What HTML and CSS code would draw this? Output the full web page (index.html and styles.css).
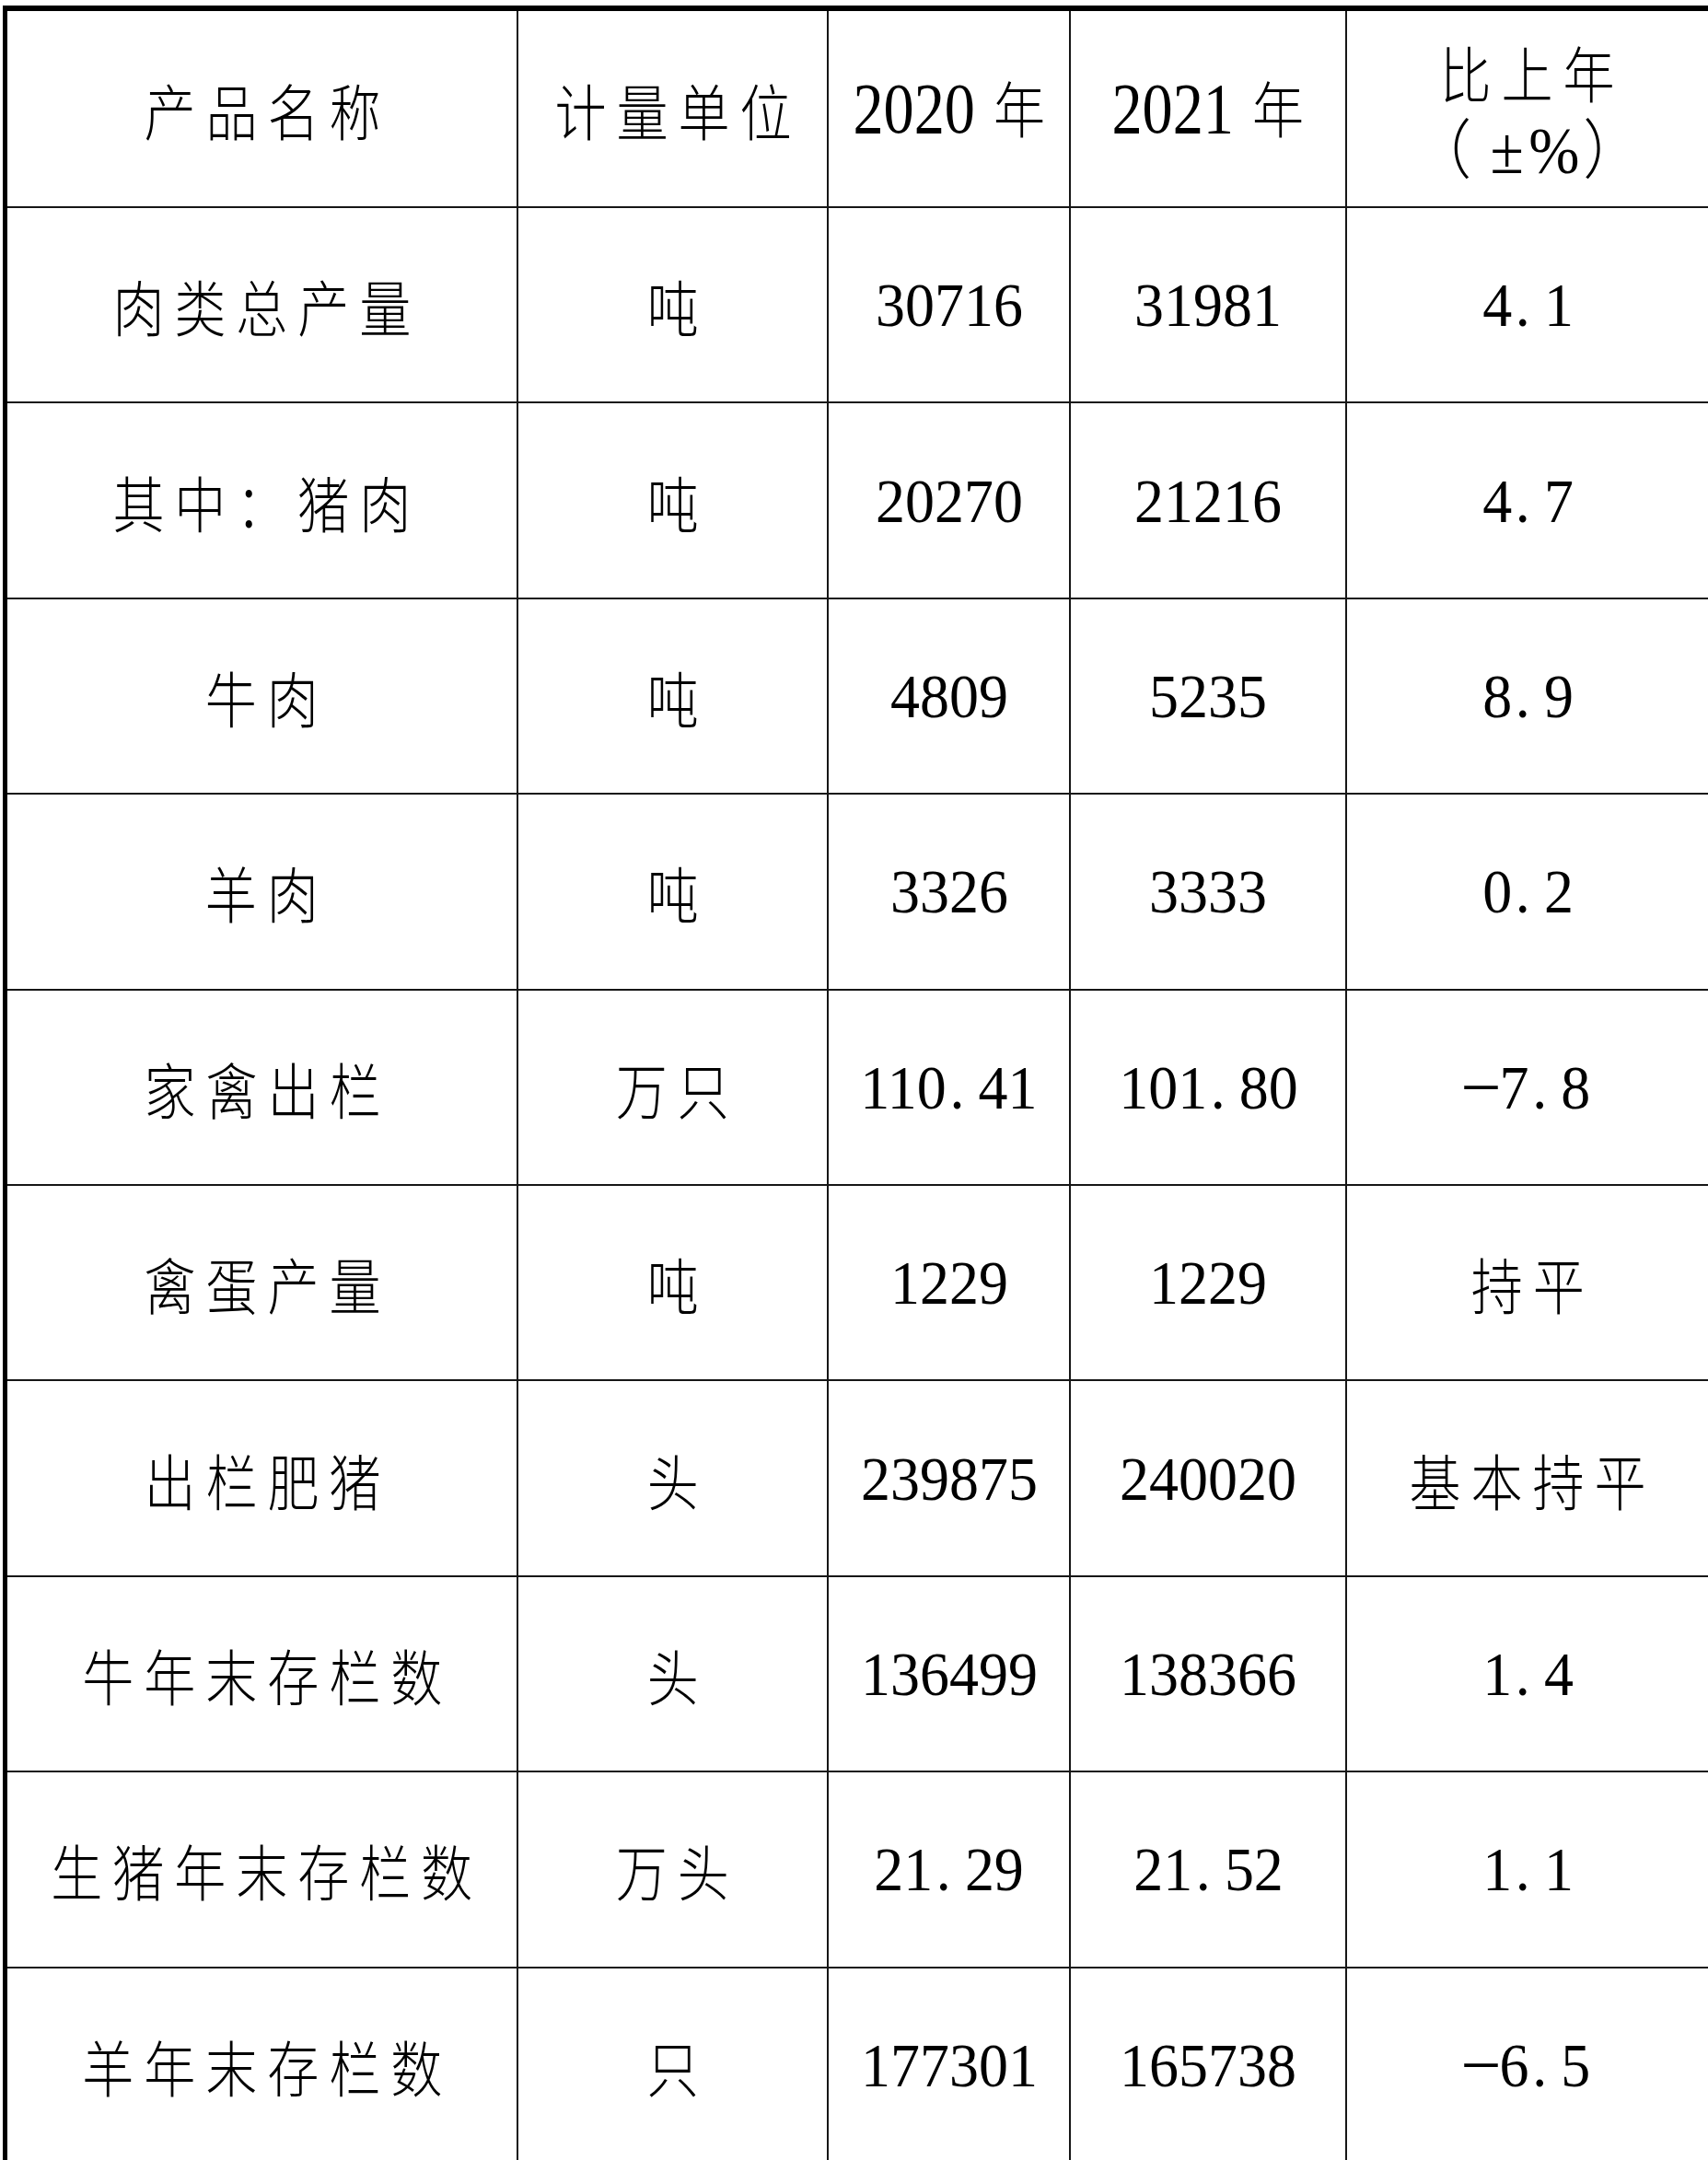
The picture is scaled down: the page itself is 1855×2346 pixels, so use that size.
FILE: index.html
```html
<!DOCTYPE html>
<html lang="zh-CN">
<head>
<meta charset="utf-8">
<title>畜牧业主要产品产量</title>
<link rel="stylesheet" href="styles.css">
</head>
<body>
<div class="tbl">
  <div class="c"><span class="zh">产品名称</span></div>
  <div class="c"><span class="zh">计量单位</span></div>
  <div class="c"><span class="hy"><span class="hd">2020</span> <span class="hz">年</span></span></div>
  <div class="c"><span class="hy"><span class="hd">2021</span> <span class="hz">年</span></span></div>
  <div class="c last">
    <div class="two">
      <div class="line"><span class="zh">比上年</span></div>
      <div class="line"><span class="pct"><span class="par open">（</span><span class="pm">±</span>%<span class="par close">）</span></span></div>
    </div>
  </div>

  <div class="c"><span class="zh">肉类总产量</span></div>
  <div class="c"><span class="zh">吨</span></div>
  <div class="c"><span class="num">30716</span></div>
  <div class="c"><span class="num">31981</span></div>
  <div class="c last"><span class="num">4<span class="dot">.</span>1</span></div>

  <div class="c"><span class="zh">其中：猪肉</span></div>
  <div class="c"><span class="zh">吨</span></div>
  <div class="c"><span class="num">20270</span></div>
  <div class="c"><span class="num">21216</span></div>
  <div class="c last"><span class="num">4<span class="dot">.</span>7</span></div>

  <div class="c"><span class="zh">牛肉</span></div>
  <div class="c"><span class="zh">吨</span></div>
  <div class="c"><span class="num">4809</span></div>
  <div class="c"><span class="num">5235</span></div>
  <div class="c last"><span class="num">8<span class="dot">.</span>9</span></div>

  <div class="c"><span class="zh">羊肉</span></div>
  <div class="c"><span class="zh">吨</span></div>
  <div class="c"><span class="num">3326</span></div>
  <div class="c"><span class="num">3333</span></div>
  <div class="c last"><span class="num">0<span class="dot">.</span>2</span></div>

  <div class="c"><span class="zh">家禽出栏</span></div>
  <div class="c"><span class="zh">万只</span></div>
  <div class="c"><span class="num">110<span class="dot">.</span>41</span></div>
  <div class="c"><span class="num">101<span class="dot">.</span>80</span></div>
  <div class="c last"><span class="num"><span class="minus">-</span>7<span class="dot">.</span>8</span></div>

  <div class="c"><span class="zh">禽蛋产量</span></div>
  <div class="c"><span class="zh">吨</span></div>
  <div class="c"><span class="num">1229</span></div>
  <div class="c"><span class="num">1229</span></div>
  <div class="c last"><span class="zh">持平</span></div>

  <div class="c"><span class="zh">出栏肥猪</span></div>
  <div class="c"><span class="zh">头</span></div>
  <div class="c"><span class="num">239875</span></div>
  <div class="c"><span class="num">240020</span></div>
  <div class="c last"><span class="zh">基本持平</span></div>

  <div class="c"><span class="zh">牛年末存栏数</span></div>
  <div class="c"><span class="zh">头</span></div>
  <div class="c"><span class="num">136499</span></div>
  <div class="c"><span class="num">138366</span></div>
  <div class="c last"><span class="num">1<span class="dot">.</span>4</span></div>

  <div class="c"><span class="zh">生猪年末存栏数</span></div>
  <div class="c"><span class="zh">万头</span></div>
  <div class="c"><span class="num">21<span class="dot">.</span>29</span></div>
  <div class="c"><span class="num">21<span class="dot">.</span>52</span></div>
  <div class="c last"><span class="num">1<span class="dot">.</span>1</span></div>

  <div class="c"><span class="zh">羊年末存栏数</span></div>
  <div class="c"><span class="zh">只</span></div>
  <div class="c"><span class="num">177301</span></div>
  <div class="c"><span class="num">165738</span></div>
  <div class="c last"><span class="num"><span class="minus">-</span>6<span class="dot">.</span>5</span></div>
</div>
</body>
</html>
```

FILE: styles.css
```css
html, body {
  margin: 0;
  padding: 0;
  overflow: hidden;
  background: #ffffff;
}

body {
  font-family: "Liberation Serif", "Noto Sans CJK SC", serif;
  color: #000000;
}

.tbl {
  display: grid;
  grid-template-columns: 555px 337px 263px 300px 392px;
  grid-template-rows: 214px;
  grid-auto-rows: 212.4px;
  width: max-content;
  margin: 6px 0 0 3px;
  border-top: 6px solid #000000;
  border-left: 5px solid #000000;
}

.c {
  box-sizing: border-box;
  border-right: 2px solid #161616;
  border-bottom: 2px solid #161616;
  display: flex;
  align-items: center;
  justify-content: center;
  white-space: nowrap;
  min-width: 0;
}

.c.last {
  border-right: none;
}

.zh {
  display: inline-block;
  font-family: "Noto Sans CJK SC", sans-serif;
  font-size: 66px;
  font-weight: 300;
  line-height: 1;
  letter-spacing: 12.8px;
  padding-left: 12.8px;
  transform: scaleX(0.85);
}

.num {
  display: inline-block;
  font-family: "Liberation Serif", serif;
  font-size: 68px;
  line-height: 1;
  transform: scaleX(0.94);
}

.dot {
  display: inline-block;
  margin: 0 16px 0 4px;
}

.minus {
  display: inline-block;
  margin: 0 10px 0 8px;
  transform: translateY(-4px) scale(2.2, 0.7);
}

.hy {
  display: inline-block;
  font-family: "Liberation Serif", serif;
  font-size: 78px;
  line-height: 1;
  transform: scaleX(0.85);
}

.hd {
  font-family: "Liberation Serif", serif;
  font-size: 78px;
}

.hz {
  font-family: "Noto Sans CJK SC", sans-serif;
  font-size: 66px;
  font-weight: 300;
  margin-left: 4px;
}

.two {
  display: flex;
  flex-direction: column;
  align-items: center;
  padding-top: 2px;
}

.line {
  height: 84px;
  display: flex;
  align-items: center;
  justify-content: center;
}

.pct {
  display: inline-block;
  font-family: "Liberation Serif", serif;
  font-size: 72px;
  line-height: 1;
  transform: scaleX(0.92);
}

.pm {
  margin-right: 6px;
}

.par {
  font-family: "Noto Sans CJK SC", sans-serif;
  font-size: 70px;
  font-weight: 300;
}

.par.open {
  margin-right: 22px;
}

.par.close {
  margin-left: 4px;
}
```
